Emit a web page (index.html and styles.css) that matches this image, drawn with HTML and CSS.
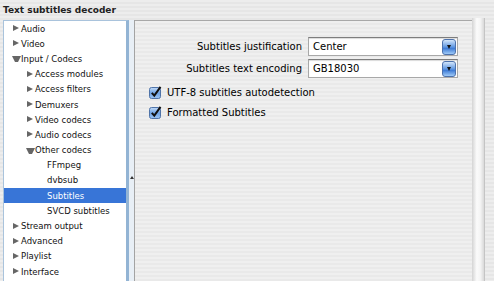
FILE: index.html
```html
<!DOCTYPE html>
<html lang="en">
  <head>
    <meta charset="UTF-8" />
    <meta name="viewport" content="width=device-width, initial-scale=1.0" />
    <title>Text subtitles decoder</title>
    <link rel="stylesheet" href="styles.css">
  </head>
  <body>
    <div class="title">Text subtitles decoder</div>

    <div class="main">
      <div class="sidebar">
        <div class="row lvl0 closed"><span class="arrow"></span>Audio</div>
        <div class="row lvl0 closed"><span class="arrow"></span>Video</div>
        <div class="row lvl0 open"><span class="arrow"></span>Input / Codecs</div>
        <div class="row lvl1 closed"><span class="arrow"></span>Access modules</div>
        <div class="row lvl1 closed"><span class="arrow"></span>Access filters</div>
        <div class="row lvl1 closed"><span class="arrow"></span>Demuxers</div>
        <div class="row lvl1 closed"><span class="arrow"></span>Video codecs</div>
        <div class="row lvl1 closed"><span class="arrow"></span>Audio codecs</div>
        <div class="row lvl1 open"><span class="arrow"></span>Other codecs</div>
        <div class="row lvl2"><span class="arrow"></span>FFmpeg</div>
        <div class="row lvl2"><span class="arrow"></span>dvbsub</div>
        <div class="row lvl2 selected"><span class="arrow"></span>Subtitles</div>
        <div class="row lvl2"><span class="arrow"></span>SVCD subtitles</div>
        <div class="row lvl0 closed"><span class="arrow"></span>Stream output</div>
        <div class="row lvl0 closed"><span class="arrow"></span>Advanced</div>
        <div class="row lvl0 closed"><span class="arrow"></span>Playlist</div>
        <div class="row lvl0 closed"><span class="arrow"></span>Interface</div>
      </div>

      <div class="splitter"><span class="caret"></span></div>

      <div class="panel">
        <div class="form">
          <label>Subtitles justification</label>
          <div class="select">
            <span>Center</span>
            <span class="btn"><span class="down"></span></span>
          </div>
          <label>Subtitles text encoding</label>
          <div class="select">
            <span>GB18030</span>
            <span class="btn"><span class="down"></span></span>
          </div>
        </div>

        <div class="check">
          <svg width="13" height="13" viewBox="0 0 13 13">
            <defs>
              <linearGradient id="cb" x1="0" y1="0" x2="0" y2="1">
                <stop offset="0" stop-color="#c4dcf7" />
                <stop offset="0.5" stop-color="#6fa3e6" />
                <stop offset="1" stop-color="#9cc4f2" />
              </linearGradient>
            </defs>
            <rect x="0.5" y="1.5" width="11" height="11" rx="2" fill="url(#cb)" stroke="#4f73a8" />
            <path d="M2.8 6.8 L5.3 9.6 L11.5 0.8" fill="none" stroke="#111" stroke-width="2" />
          </svg>
          <span>UTF-8 subtitles autodetection</span>
        </div>
        <div class="check">
          <svg width="13" height="13" viewBox="0 0 13 13">
            <rect x="0.5" y="1.5" width="11" height="11" rx="2" fill="url(#cb)" stroke="#4f73a8" />
            <path d="M2.8 6.8 L5.3 9.6 L11.5 0.8" fill="none" stroke="#111" stroke-width="2" />
          </svg>
          <span>Formatted Subtitles</span>
        </div>
      </div>

      <div class="track"></div>
    </div>
  </body>
</html>
```

FILE: styles.css
```css
body {
  margin: 0;
  height: 281px;
  overflow: hidden;
  font-family: "DejaVu Sans", sans-serif;
  color: #000;
  background: repeating-linear-gradient(to bottom, #ededed 0 2px, #e6e6e6 2px 4px);
}
.title {
  height: 20px;
  padding: 5px 0 0 3px;
  box-sizing: border-box;
  font-size: 9px;
  font-weight: bold;
  line-height: 11px;
  color: #222;
}
.main {
  display: flex;
  height: 266px;
}
.sidebar {
  width: 122px;
  margin-left: 3px;
  background: #fff;
  border: 1px solid #a9c3dc;
  border-right: 3px solid #93b4d4;
  font-size: 8.5px;
  color: #111;
}
.row {
  display: flex;
  align-items: center;
  height: 15.2px;
  white-space: nowrap;
}
.lvl0 {
  padding-left: 8px;
}
.lvl1 {
  padding-left: 22px;
}
.lvl2 {
  padding-left: 34px;
}
.arrow {
  width: 9px;
  height: 7px;
  flex: none;
}
.closed .arrow::before {
  content: "";
  display: block;
  margin-left: 1px;
  border-left: 6px solid #666;
  border-top: 3.5px solid transparent;
  border-bottom: 3.5px solid transparent;
}
.open .arrow::before {
  content: "";
  display: block;
  margin-top: 1px;
  border-top: 6px solid #666;
  border-left: 3.5px solid transparent;
  border-right: 3.5px solid transparent;
}
.selected {
  background: #3875d7;
  color: #fff;
}
.splitter {
  width: 6px;
  box-sizing: border-box;
  background: #e8eff6;
  border-right: 1px solid #a3a3a3;
  display: flex;
  flex-direction: column;
  align-items: center;
  padding-top: 156px;
}
.caret {
  width: 0;
  height: 0;
  border-bottom: 3px solid #333;
  border-left: 2px solid transparent;
  border-right: 2px solid transparent;
}
.panel {
  flex: 1;
  border-top: 1px solid #a8a8a8;
  background: repeating-linear-gradient(to bottom, #efefef 0 2px, #e9e9e9 2px 4px);
  padding: 16px 14px 0 14px;
  font-size: 10px;
}
.form {
  display: grid;
  grid-template-columns: 1fr 150px;
  grid-auto-rows: 19px;
  column-gap: 6px;
  row-gap: 3px;
  align-items: center;
  margin-bottom: 6px;
}
.form label {
  text-align: right;
  white-space: nowrap;
}
.select {
  display: flex;
  align-items: center;
  height: 19px;
  box-sizing: border-box;
  padding-left: 4px;
  background: #fff;
  border: 1px solid #a8a8a8;
  border-top-color: #7d7d7d;
  box-shadow: inset 0 1px 1px rgba(0, 0, 0, 0.15);
}
.btn {
  margin-left: auto;
  margin-right: 1px;
  width: 12px;
  height: 14px;
  border-radius: 3px;
  border: 1px solid #4d72ad;
  background: linear-gradient(#d3e6fb, #5f97e2 50%, #3f7cd6 60%, #9fcaf7);
  display: flex;
  align-items: center;
  justify-content: center;
}
.down {
  width: 0;
  height: 0;
  border-top: 4px solid #111;
  border-left: 2.5px solid transparent;
  border-right: 2.5px solid transparent;
}
.check {
  display: flex;
  align-items: center;
  gap: 5px;
  height: 16px;
  margin-top: 4px;
  white-space: nowrap;
}
.track {
  width: 12px;
  margin-right: 9px;
  margin-top: -2px;
  background: linear-gradient(to right, #d4d4d4, #fbfbfb 40%, #f4f4f4 70%, #d9d9d9);
  border-right: 1px solid #c4c4c4;
}
```
